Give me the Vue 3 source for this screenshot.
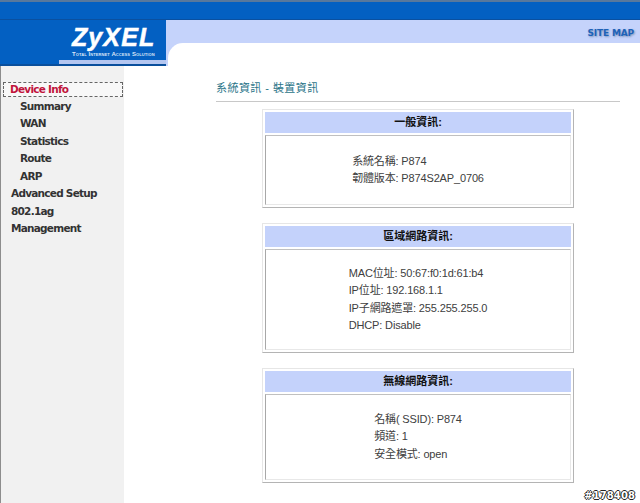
<script setup>
const menu = [
  { label: 'Device Info', level: 'active' },
  { label: 'Summary', level: 'sub' },
  { label: 'WAN', level: 'sub' },
  { label: 'Statistics', level: 'sub' },
  { label: 'Route', level: 'sub' },
  { label: 'ARP', level: 'sub' },
  { label: 'Advanced Setup', level: 'top' },
  { label: '802.1ag', level: 'top' },
  { label: 'Management', level: 'top' },
]
const cards = [
  { title: '一般資訊:', bodyHeight: 70, lines: ['系統名稱: P874', '韌體版本: P874S2AP_0706'] },
  { title: '區域網路資訊:', bodyHeight: 101, lines: ['MAC位址: 50:67:f0:1d:61:b4', 'IP位址: 192.168.1.1', 'IP子網路遮罩: 255.255.255.0', 'DHCP: Disable'] },
  { title: '無線網路資訊:', bodyHeight: 86, lines: ['名稱( SSID): P874', '頻道: 1', '安全模式: open'] },
]
</script>

<template>
  <div class="page">
    <header class="header">
      <div class="band"></div>
      <div class="banner">
        <div class="logo">
          <div class="logo-text">
            <div class="brand">ZyXEL</div>
            <div class="tagline">Total Internet Access Solution</div>
          </div>
          <div class="strip"></div>
        </div>
        <div class="banner-right">
          <div class="sitemap-row"><span class="sitemap">SITE MAP</span></div>
          <div class="curve-row"><div class="curve"></div></div>
        </div>
      </div>
    </header>
    <div class="content">
      <nav class="sidebar">
        <div v-for="item in menu" :key="item.label" class="item" :class="item.level">{{ item.label }}</div>
      </nav>
      <main class="main">
        <h1 class="title">系統資訊 - 裝置資訊</h1>
        <div class="rule"></div>
        <section v-for="card in cards" :key="card.title" class="card">
          <div class="card-head">{{ card.title }}</div>
          <div class="card-body" :style="{ height: card.bodyHeight + 'px' }">
            <div class="lines">
              <div v-for="line in card.lines" :key="line" class="line">{{ line }}</div>
            </div>
          </div>
        </section>
      </main>
    </div>
    <div class="watermark">#178408</div>
  </div>
</template>

<style scoped>
.page {
  position: relative;
  width: 640px;
  height: 503px;
  overflow: hidden;
  background: #fff;
  font-family: "Liberation Sans", "Noto Sans CJK TC", sans-serif;
}
.band {
  height: 20px;
  box-sizing: border-box;
  background: #0360c2;
  border-top: 2px solid #58789c;
  border-bottom: 1px solid #0a50a0;
}
.banner {
  display: flex;
  height: 46px;
}
.logo {
  width: 166px;
  flex: none;
  box-sizing: border-box;
  background: #0360c2;
  border-bottom: 2px solid #0a4f9c;
  display: flex;
  flex-direction: column;
  align-items: flex-end;
}
.logo-text {
  width: 83px;
  margin-right: 11px;
  height: 40px;
  box-sizing: border-box;
  padding-top: 5px;
  color: #fff;
}
.brand {
  font-weight: 700;
  font-style: italic;
  font-size: 25px;
  line-height: 25px;
  letter-spacing: 1.1px;
  white-space: nowrap;
  -webkit-text-stroke: 0.5px #fff;
}
.tagline {
  font-size: 6px;
  line-height: 6px;
  margin-top: 1px;
  font-weight: 700;
  font-variant: small-caps;
  letter-spacing: 0.1px;
  color: #d8e4f6;
  white-space: nowrap;
}
.strip {
  width: 107px;
  height: 4px;
  background: #b4c6f0;
}
.banner-right {
  flex: 1;
  display: flex;
  flex-direction: column;
  background: #c5d3fb;
}
.sitemap-row {
  height: 23px;
  display: flex;
  justify-content: flex-end;
  align-items: flex-start;
  padding: 8px 6px 0 0;
  box-sizing: border-box;
}
.sitemap {
  font-size: 9px;
  line-height: 11px;
  font-weight: 700;
  font-family: "DejaVu Sans", sans-serif;
  letter-spacing: -0.15px;
  color: #1d62b8;
  text-shadow: 1px 1px 2px #7e93b8;
}
.curve-row {
  flex: 1;
  padding-left: 2px;
  display: flex;
}
.curve {
  flex: 1;
  background: #fff;
  border-top-left-radius: 15px;
}
.content {
  display: flex;
}
.sidebar {
  width: 124px;
  height: 437px;
  flex: none;
  box-sizing: border-box;
  background: #f1f1f1;
  border-left: 1px solid #8d8d8d;
  padding-top: 16px;
  font-family: "DejaVu Sans", sans-serif;
  font-size: 10.5px;
  font-weight: 700;
  color: #333;
}
.item {
  height: 17.5px;
  line-height: 17.5px;
  padding-left: 10px;
  white-space: nowrap;
  letter-spacing: -0.75px;
}
.item.sub {
  padding-left: 19px;
}
.item.active {
  margin: 0 1px 0.5px 2px;
  height: 15px;
  line-height: 13px;
  padding-left: 6px;
  box-sizing: border-box;
  border: 1px dashed #666;
  color: #c0143c;
  background: #f8f8f8;
}
.main {
  flex: 1;
  min-width: 0;
  padding-left: 92px;
  padding-right: 20px;
  display: flex;
  flex-direction: column;
}
.title {
  margin: 15px 0 0;
  height: 20px;
  font-size: 11px;
  line-height: 14px;
  font-weight: 400;
  letter-spacing: 0.45px;
  color: #2a7488;
}
.rule {
  height: 1px;
  background: #c8c8c8;
  margin-bottom: 7px;
}
.card {
  width: 312px;
  align-self: flex-start;
  margin-left: 46px;
  margin-bottom: 15px;
  box-sizing: border-box;
  padding: 2px;
  border: 1px solid;
  border-color: #e6e6e6 #b4b4b4 #b4b4b4 #e6e6e6;
  display: flex;
  flex-direction: column;
  gap: 2px;
}
.card-head {
  height: 21px;
  background: #c4d2fb;
  text-align: center;
  font-size: 11px;
  line-height: 21px;
  font-weight: 700;
  color: #111;
}
.card-body {
  box-sizing: border-box;
  border: 1px solid;
  border-color: #c0c0c0 #e8e8e8 #e8e8e8 #a8a8a8;
  display: flex;
  justify-content: center;
  align-items: center;
}
.lines {
  font-size: 11px;
  line-height: 17.5px;
  letter-spacing: -0.15px;
  color: #404040;
}
.line {
  white-space: nowrap;
}
.watermark {
  position: absolute;
  right: 5px;
  bottom: 1px;
  font-family: "DejaVu Sans", sans-serif;
  font-size: 10px;
  line-height: 12px;
  font-weight: 700;
  letter-spacing: 0.1px;
  color: #fff;
  text-shadow: 1px 0 0 #222, -1px 0 0 #222, 0 1px 0 #222, 0 -1px 0 #222;
}
</style>
